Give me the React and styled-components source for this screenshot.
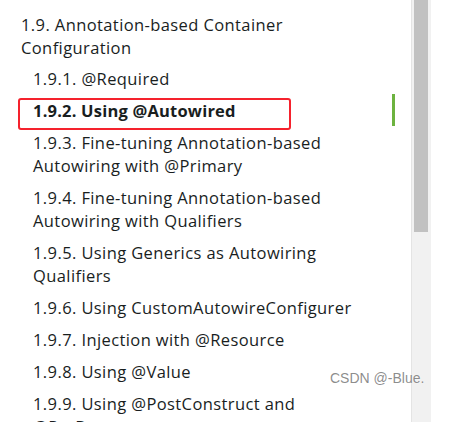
import React from "react";
import styled, { createGlobalStyle } from "styled-components";

const Global = createGlobalStyle`
  html, body { margin: 0; padding: 0; background: #fff; }
  body { width: 450px; height: 422px; overflow: hidden; }
`;

const Page = styled.div`
  display: flex;
  width: 450px;
  height: 422px;
  overflow: hidden;
  position: relative;
  background: #fff;
`;

const Nav = styled.nav`
  width: 411px;
  flex: none;
  overflow: hidden;
`;

const List = styled.ul`
  list-style: none;
  margin: 0 16px 0 0;
  padding: 8px 0 0;
  font-family: "Open Sans", "Liberation Sans", sans-serif;
  font-size: 16.5px;
  line-height: 23px;
  color: #191e1e;
`;

const Item = styled.li`
  position: relative;
  padding: 4.5px 20px ${(p) => (p.$level === 1 ? 3.5 : 4.5)}px
    ${(p) => (p.$level === 1 ? 21 : 33)}px;
  font-weight: ${(p) => (p.$active ? 700 : 400)};
  letter-spacing: ${(p) => (p.$active ? "0.2px" : "0.4px")};
  border-right: 3px solid ${(p) => (p.$active ? "#6db33f" : "transparent")};
`;

const Highlight = styled.span`
  position: absolute;
  left: 18px;
  top: 4px;
  width: 273px;
  height: 32px;
  box-sizing: border-box;
  border: 2px solid #f5222d;
  border-radius: 3px;
  pointer-events: none;
`;

const Scrollbar = styled.div`
  width: 20px;
  flex: none;
  height: 100%;
  background: #f1f1f1;
  border-left: 1px solid #e4e4e4;
  box-sizing: border-box;
  padding: 0 3px 0 2px;
`;

const Thumb = styled.div`
  height: 232px;
  background: #c1c1c1;
`;

const Watermark = styled.div`
  position: absolute;
  left: 330px;
  top: 370px;
  font-family: "Liberation Sans", Arial, sans-serif;
  font-size: 14px;
  color: rgba(120, 120, 120, 0.85);
  text-shadow: 0 0 2px #fff;
  white-space: nowrap;
`;

const items = [
  { level: 1, text: "1.9. Annotation-based Container Configuration" },
  { level: 2, text: "1.9.1. @Required" },
  { level: 2, text: "1.9.2. Using @Autowired", active: true },
  { level: 2, text: "1.9.3. Fine-tuning Annotation-based Autowiring with @Primary" },
  { level: 2, text: "1.9.4. Fine-tuning Annotation-based Autowiring with Qualifiers" },
  { level: 2, text: "1.9.5. Using Generics as Autowiring Qualifiers" },
  { level: 2, text: "1.9.6. Using CustomAutowireConfigurer" },
  { level: 2, text: "1.9.7. Injection with @Resource" },
  { level: 2, text: "1.9.8. Using @Value" },
  { level: 2, text: "1.9.9. Using @PostConstruct and @PreDestroy" },
];

export default function App() {
  return (
    <>
      <Global />
      <Page>
        <Nav>
          <List>
            {items.map((it) => (
              <Item key={it.text} $level={it.level} $active={it.active}>
                {it.text}
                {it.active && <Highlight />}
              </Item>
            ))}
          </List>
        </Nav>
        <Scrollbar>
          <Thumb />
        </Scrollbar>
        <Watermark>CSDN @-Blue.</Watermark>
      </Page>
    </>
  );
}
